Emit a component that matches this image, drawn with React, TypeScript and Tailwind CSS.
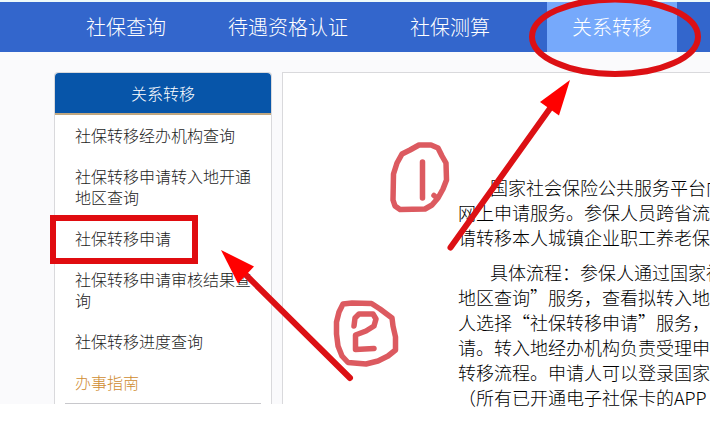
import React from 'react';

const navItems = [
  { label: '社保查询', className: 'hover:bg-[#76a9fb]' },
  { label: '待遇资格认证', className: 'ml-3 hover:bg-[#76a9fb]' },
  { label: '社保测算', className: 'ml-3 hover:bg-[#76a9fb]' },
  { label: '关系转移', className: 'ml-8 bg-[#76a9fb]' },
];

const sideItems = [
  '社保转移经办机构查询',
  '社保转移申请转入地开通地区查询',
  '社保转移申请',
  '社保转移申请审核结果查询',
  '社保转移进度查询',
];

const paragraphs = [
  [
    '国家社会保险公共服务平台向',
    '网上申请服务。参保人员跨省流',
    '请转移本人城镇企业职工养老保',
  ],
  [
    '具体流程：参保人通过国家社',
    '地区查询”服务，查看拟转入地',
    '人选择“社保转移申请”服务，',
    '请。转入地经办机构负责受理申',
    '转移流程。申请人可以登录国家',
    '（所有已开通电子社保卡的APP',
  ],
];

const Annotations = () => (
  <svg
    className="absolute top-0 left-0 pointer-events-none"
    width="710"
    height="438"
    viewBox="0 0 710 438"
    fill="none"
    aria-hidden="true"
  >
    {/* tab and menu highlights */}
    <ellipse cx="615" cy="36.7" rx="83" ry="37.3" stroke="#dc1014" strokeWidth="6" />
    <rect x="53" y="218" width="142" height="43" stroke="#e00c10" strokeWidth="6" />

    {/* arrows */}
    <path d="M450.5 247.5L551 107" stroke="#dc1014" strokeWidth="6" strokeLinecap="round" />
    <path d="M570 80L540 102L559 115.5Z" fill="#ff0000" />
    <path d="M350 378L244 273" stroke="#dc1014" strokeWidth="6" strokeLinecap="round" />
    <path d="M221 250L254 266.5L238 283.5Z" fill="#ff0000" />

    {/* handwritten step numbers */}
    <g stroke="#dc5a60" strokeWidth="5.5" strokeLinecap="round" strokeLinejoin="round">
      <path d="M419 145L431 145L438 148L442 156L446 163L446.5 180L443 189L438 198L432 205L425 209L400 209.5L395 206L393 200L393.5 174L397 163L402 154L410 150Z" />
      <path d="M422.5 162V198" />
      <path d="M434 195.5L437 198" />
      <path d="M343 304L352 303L371.5 303.5L380 309L392 318L393 326L395.5 337V350L388 356L378 361L366 364L348 362.5L342 356L338 346L336.5 334V322L339 312Z" />
      <path d="M354 326L355 318L359 314L373 314L376 319L374 326L366 331L355.5 335V349.5L374 348.5" />
    </g>
  </svg>
);

const App = () => {
  return (
    <div className="relative min-h-screen overflow-hidden bg-white font-['Noto_Sans_CJK_SC',sans-serif] font-light">
      <div className="bg-[#fafafc]">
        <nav className="flex h-[52px] border-t-2 border-[#eefafa] bg-[#3366cc] pl-[61px] text-xl text-white">
          {navItems.map((item) => (
            <a
              key={item.label}
              href="#"
              className={`flex shrink-0 items-center px-[25px] ${item.className}`}
            >
              {item.label}
            </a>
          ))}
        </nav>

        <div className="flex gap-[10px] pt-5 pl-[54px]">
          <aside className="w-[218px] shrink-0 rounded-t border-x border-t border-[#d9d9dc] bg-white">
            <h2 className="flex h-[42px] items-center justify-center rounded-t-sm border-b-2 border-[#c0a780] bg-[#0755a9] text-base text-white">
              关系转移
            </h2>
            <ul className="text-base leading-[21px] text-[#1c1c1c]">
              {sideItems.map((item) => (
                <li key={item}>
                  <a href="#" className="block px-5 py-[10px]">
                    {item}
                  </a>
                </li>
              ))}
              <li className="mx-[10px] border-b border-[#c8c8cc]">
                <a href="#" className="block px-[10px] py-[10px] text-[#cf8c30]">
                  办事指南
                </a>
              </li>
            </ul>
          </aside>

          <main className="min-w-0 flex-1 border-t border-l border-[#d9d9dc] bg-white pt-[102px] pl-[175px]">
            <div className="-mb-2 flex flex-col gap-[10px] text-lg leading-[25px] text-black">
              {paragraphs.map((lines) => (
                <p key={lines[0]} className="indent-8 whitespace-nowrap">
                  {lines.map((line, index) => (
                    <React.Fragment key={line}>
                      {index > 0 && <br />}
                      {line}
                    </React.Fragment>
                  ))}
                </p>
              ))}
            </div>
          </main>
        </div>
      </div>

      <Annotations />
    </div>
  );
};

export default App;
